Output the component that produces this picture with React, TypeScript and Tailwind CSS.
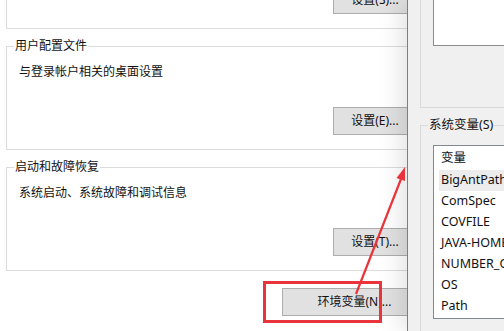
import type React from "react"

const font = "font-['Noto_Sans','Noto_Sans_CJK_SC',sans-serif]"

function WinButton({ children, className }: { children: React.ReactNode; className?: string }) {
  return (
    <button
      className={
        "h-[28px] bg-[#e1e1e1] border border-[#adadad] text-[12px] leading-[16px] text-[#111] " +
        (className ?? "")
      }
    >
      {children}
    </button>
  )
}

function GroupBox({
  title,
  desc,
  button,
  className,
}: {
  title: string
  desc: string
  button: string
  className?: string
}) {
  return (
    <fieldset className={"min-w-0 border border-[#dcdcdc] " + (className ?? "")}>
      <legend className="ml-[7px] px-[1px] text-[12px] leading-[16px] text-[#111]">{title}</legend>
      <div className="pl-[12px] pt-[10px] text-[12px] leading-[16px] text-[#111]">{desc}</div>
      <div className="flex justify-end pr-[10px] pt-[27px] pb-[14px]">
        <WinButton className="w-[84px]">{button}</WinButton>
      </div>
    </fieldset>
  )
}

const vars = ["BigAntPath", "ComSpec", "COVFILE", "JAVA-HOME", "NUMBER_OF_PROCESSORS", "OS", "Path"]

export default function App() {
  return (
    <div className={"relative flex w-[504px] h-[331px] overflow-hidden bg-white " + font}>
      {/* 系统属性 - 高级 */}
      <div className="w-[407px] shrink-0 overflow-hidden bg-white">
        <div className="w-[432px] pl-[6px] pr-[4px] flex flex-col">
          {/* 性能 (上半部分被裁掉) */}
          <div className="-mt-[40px] h-[69px] border border-[#dcdcdc] flex items-end justify-end pr-[10px] pb-[14px]">
            <WinButton className="w-[84px]">设置(S)...</WinButton>
          </div>
          <GroupBox
            className="mt-[9px]"
            title="用户配置文件"
            desc="与登录帐户相关的桌面设置"
            button="设置(E)..."
          />
          <GroupBox
            className="mt-[9px]"
            title="启动和故障恢复"
            desc="系统启动、系统故障和调试信息"
            button="设置(T)..."
          />
          <div className="flex justify-end pr-[1px] mt-[17px]">
            <WinButton className="w-[145px]">环境变量(N)...</WinButton>
          </div>
        </div>
      </div>

      {/* 环境变量 */}
      <div className="relative z-10 flex-1 overflow-hidden border-l border-[#47a447] bg-[#f0f0f0] shadow-[-8px_0_20px_rgba(0,0,0,0.10)]">
        <div className="w-[300px] pl-[12px] flex flex-col">
          <div className="-mt-[40px] h-[148px] border border-[#d9d9d9] pl-[12px] pt-[15px]">
            <div className="h-[70px] border border-[#8c8c8c] bg-white" />
          </div>
          <fieldset className="mt-[9px] min-w-0 border border-[#d9d9d9]">
            <legend className="ml-[7px] px-[1px] text-[12.5px] leading-[16px] text-[#111]">系统变量(S)</legend>
            <div className="pl-[12px] pt-[12px]">
              <div className="w-[250px] border border-[#828790] bg-white px-[5px] pb-[1px] text-[12.5px] text-[#111]">
                <div className="h-[24px] flex items-center pl-[2px]">变量</div>
                {vars.map((v, i) => (
                  <div
                    key={v}
                    className={
                      "h-[21px] flex items-center pl-[2px] whitespace-nowrap " + (i === 0 ? "bg-[#ececec]" : "")
                    }
                  >
                    {v}
                  </div>
                ))}
              </div>
            </div>
            <div className="h-[40px]" />
          </fieldset>
        </div>
      </div>

      {/* 标注 */}
      <div className="absolute inset-0 z-20 pointer-events-none">
        <div className="absolute left-[263px] top-[281px] w-[119px] h-[42px] border-[3px] border-[#e8343a]" />
        <svg className="absolute inset-0" width="504" height="331" viewBox="0 0 504 331">
          <line x1="356" y1="294" x2="401" y2="179" stroke="#e8343a" strokeWidth="2.2" />
          <polygon points="405,167 396.5,178 405,181" fill="#e8343a" />
        </svg>
      </div>
    </div>
  )
}
